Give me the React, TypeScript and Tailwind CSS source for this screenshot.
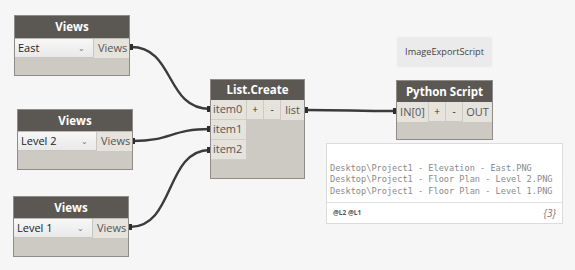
import React from "react";

const font = { fontFamily: '"Open Sans", "Noto Sans", sans-serif' };

function Header({ title, h }: { title: string; h: string }) {
  return (
    <div className={`${h} bg-[#5b5853] flex items-center justify-center text-white font-bold text-[11.5px] leading-none`}>
      {title}
    </div>
  );
}

function ViewsNode({ left, top, label, hh, dw }: { left: string; top: string; label: string; hh: string; dw: string }) {
  return (
    <div className={`absolute ${left} ${top} w-[116px] h-[61px] flex flex-col border border-[#8f8b86] bg-[#cdc9c3]`}>
      <Header title="Views" h={hh} />
      <div className="h-[20px] flex border-t border-[#bdb9b3]">
        <div className={`${dw} h-full bg-gradient-to-b from-[#f7f7f7] to-[#e9e9e9] border-r border-b border-[#c9c6c1] flex items-center justify-between pl-[3px] pr-[8px]`}>
          <span className="text-[11px] text-[#222]">{label}</span>
          <span className="text-[8px] text-[#777]">⌄</span>
        </div>
        <div className="flex-1 h-full bg-[#e6e2dc] flex items-center pl-[4px] text-[11px] text-[#555]">Views</div>
      </div>
      <div className="flex-1" />
    </div>
  );
}

export default function App() {
  return (
    <div className="relative w-[575px] h-[270px] bg-[#f6f6f6] overflow-hidden" style={font}>
      <svg className="absolute inset-0" width="575" height="270">
        <g fill="none" stroke="#3b3b3b" strokeWidth="2.4">
          <path d="M131,47 C175,47 165,109 210,109" />
          <path d="M133,141 C171,141 171,129 210,129" />
          <path d="M130,227 C175,227 165,150 210,150" />
          <path d="M306,110 C350,110 352,111 396,111" />
        </g>
        <g fill="#2e2e2e">
          <rect x="130" y="44" width="3" height="6" />
          <rect x="132" y="138" width="3" height="6" />
          <rect x="129" y="224" width="3" height="6" />
          <rect x="305" y="107" width="3" height="6" />
          <path d="M207,106 L211,106 L211,112 L207,112 Z" />
          <path d="M207,126 L211,126 L211,132 L207,132 Z" />
          <path d="M207,147 L211,147 L211,153 L207,153 Z" />
          <path d="M393,108 L397,108 L397,114 L393,114 Z" />
        </g>
      </svg>

      <ViewsNode left="left-[14px]" top="top-[15px]" label="East" hh="h-[22px]" dw="w-[79px]" />
      <ViewsNode left="left-[17px]" top="top-[109px]" label="Level 2" hh="h-[21px]" dw="w-[79px]" />
      <ViewsNode left="left-[13px]" top="top-[196px]" label="Level 1" hh="h-[21px]" dw="w-[79px]" />

      {/* List.Create */}
      <div className="absolute left-[210px] top-[79px] w-[95px] h-[100px] flex flex-col border border-[#8f8b86] bg-[#cdc9c3]">
        <Header title="List.Create" h="h-[20px]" />
        <div className="flex">
          <div className="flex flex-col w-[35px]">
            {["item0", "item1", "item2"].map((t) => (
              <div key={t} className="h-[20px] bg-[#e6e2dc] border-b border-[#d2cec8] flex items-center pl-[2px] text-[11px] text-[#555]">
                {t}
              </div>
            ))}
          </div>
          <div className="flex h-[19px] pl-[1px] gap-[1px]">
            <div className="w-[16px] h-full bg-[#e6e2dc] flex items-center justify-center text-[10px] text-[#333]">+</div>
            <div className="w-[16px] h-full bg-[#e6e2dc] flex items-center justify-center text-[10px] text-[#333]">-</div>
          </div>
          <div className="flex-1 h-[20px] ml-[1px] bg-[#e6e2dc] flex items-center justify-center text-[11px] text-[#555]">list</div>
        </div>
        <div className="flex-1" />
      </div>

      {/* Note */}
      <div className="absolute left-[398px] top-[38px] w-[93px] h-[28px] bg-[#ebebeb] shadow-[0_0_2px_rgba(0,0,0,0.15)] flex items-center justify-center text-[9.2px] text-[#444]">
        ImageExportScript
      </div>

      {/* Python Script */}
      <div className="absolute left-[396px] top-[80px] w-[97px] h-[60px] flex flex-col border border-[#8f8b86] bg-[#cdc9c3]">
        <Header title="Python Script" h="h-[21px]" />
        <div className="flex h-[20px] gap-[1px]">
          <div className="w-[31px] h-full bg-[#e6e2dc] flex items-center justify-center text-[11px] text-[#555]">IN[0]</div>
          <div className="w-[16px] h-[19px] bg-[#e6e2dc] flex items-center justify-center text-[10px] text-[#333]">+</div>
          <div className="w-[16px] h-[19px] bg-[#e6e2dc] flex items-center justify-center text-[10px] text-[#333]">-</div>
          <div className="flex-1 h-full bg-[#e6e2dc] flex items-center justify-center text-[11px] text-[#555]">OUT</div>
        </div>
        <div className="flex-1" />
      </div>

      {/* Preview */}
      <div className="absolute left-[326px] top-[143px] w-[237px] h-[81px] bg-white border border-[#dcdcdc] flex flex-col">
        <div className="h-[59px] border-b border-[#e2e2e2] flex flex-col justify-end pb-[5px] pl-[3px] text-[#8a8a8a] text-[8.6px] leading-[11.5px]" style={{ fontFamily: '"DejaVu Sans Mono", monospace' }}>
          <div>Desktop\Project1 - Elevation - East.PNG</div>
          <div>Desktop\Project1 - Floor Plan - Level 2.PNG</div>
          <div>Desktop\Project1 - Floor Plan - Level 1.PNG</div>
        </div>
        <div className="flex-1 flex items-center justify-between pl-[6px] pr-[6px]">
          <span className="text-[6.5px] font-bold text-[#555]">@L2 @L1</span>
          <span className="text-[10px] italic text-[#8b6b6b]">{"{3}"}</span>
        </div>
      </div>
    </div>
  );
}
